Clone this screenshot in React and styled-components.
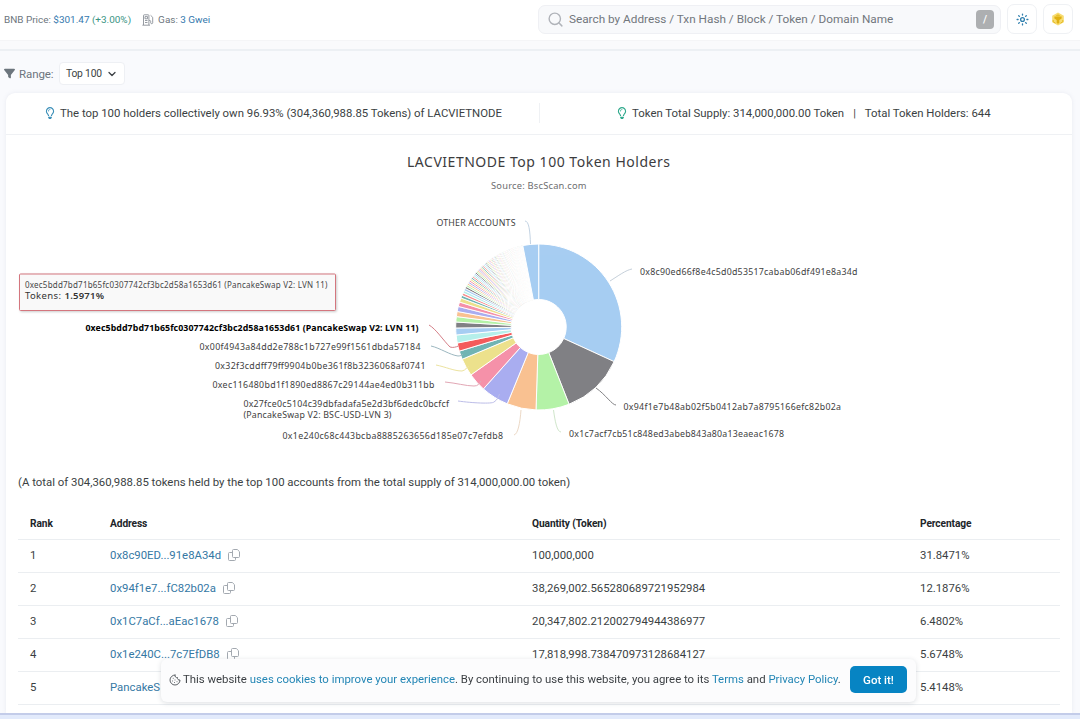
import React from "react";
import styled, { createGlobalStyle } from "styled-components";
import { FaFilter, FaRegLightbulb } from "react-icons/fa6";
import { ChevronDown, Cookie, Search } from "lucide-react";

const HOLDERS = [
  { rank: 1, address: "0x8c90ED...91e8A34d", quantity: "100,000,000", share: "31.8471%" },
  { rank: 2, address: "0x94f1e7...fC82b02a", quantity: "38,269,002.565280689721952984", share: "12.1876%" },
  { rank: 3, address: "0x1C7aCf...aEac1678", quantity: "20,347,802.212002794944386977", share: "6.4802%" },
  { rank: 4, address: "0x1e240C...7c7EfDB8", quantity: "17,818,998.738470973128684127", share: "5.6748%" },
  { rank: 5, address: "PancakeS", quantity: "", share: "5.4148%" },
];

const COLORS = [
  "#7cb5ec",
  "#434348",
  "#90ed7d",
  "#f7a35c",
  "#8085e9",
  "#f15c80",
  "#e4d354",
  "#2b908f",
  "#f45b5b",
  "#91e8e1",
];

const CX = 532.7;
const CY = 192;
const OUTER = 83;
const INNER = 27.5;
const ACTIVE = 8;
const OTHERS = 3.07;

const TOP_SHARES = [
  31.8471, 12.1876, 6.4802, 5.6748, 5.4148, 3.6, 3.45, 1.65, 1.5971, 1.55, 1.35, 1.15, 1.05, 1,
  0.98, 0.88, 0.82, 0.55, 0.5, 0.5, 0.46, 0.42,
];

const sum = (list) => list.reduce((a, b) => a + b, 0);

// largest wallets first, then the long tail, then everything else
const buildShares = () => {
  const tail = Array.from({ length: 100 - TOP_SHARES.length }, (_, i) => 0.978 ** i);
  const scale = (100 - OTHERS - sum(TOP_SHARES)) / sum(tail);
  return [...TOP_SHARES, ...tail.map((value) => value * scale), OTHERS];
};

const point = (angle, r) => {
  const a = (angle / 100) * Math.PI * 2;
  return `${(CX + Math.sin(a) * r).toFixed(2)} ${(CY - Math.cos(a) * r).toFixed(2)}`;
};

const buildSlices = () => {
  let start = 0;
  return buildShares().map((share, i) => {
    const end = start + share;
    const d = `M${point(start, OUTER)}A${OUTER} ${OUTER} 0 0 1 ${point(end, OUTER)}L${point(
      end,
      INNER
    )}A${INNER} ${INNER} 0 0 0 ${point(start, INNER)}Z`;
    start = end;
    return { d, color: COLORS[i % COLORS.length], faded: i !== ACTIVE };
  });
};

const SLICES = buildSlices();

const CONNECTORS = [
  { d: "M519 86C523 86 524 96 524.5 109", color: "#c3d3e3" },
  { d: "M626 134C620 135 612 141 604 146", color: "#c6d0da" },
  { d: "M610 270C606 270 600 260 590 253", color: "#828285" },
  { d: "M555 297C551 297 549 286 547.5 275", color: "#d0e6cb" },
  { d: "M508 300C512 299 514 288 515 275", color: "#ecd9c6" },
  { d: "M452 266C466 268 486 269 488 267C491 265 492 263 493.5 259", color: "#bcbde8" },
  { d: "M439 247C450 248 460 251 468 251C472 251 473 249 475 246", color: "#e2a7b5" },
  { d: "M430 230C440 232 448 236 456 236C460 235 460 233 463 231", color: "#ece3a0" },
  { d: "M425 211C434 213 444 220 452 221C455 221 456 220 457 219", color: "#9cb7c0" },
  { d: "M423 190C430 194 437 205 444 212C447 213 450 212 452.5 211", color: "#d57f88" },
];

const LABELS = [
  { x: 430.5, y: 90.5, w: 79, text: "OTHER ACCOUNTS" },
  { x: 634, y: 139.5, w: 217.5, text: "0x8c90ed66f8e4c5d0d53517cabab06df491e8a34d" },
  { x: 617.5, y: 274.5, w: 217.5, text: "0x94f1e7b48ab02f5b0412ab7a8795166efc82b02a" },
  { x: 563, y: 302, w: 215, text: "0x1c7acf7cb51c848ed3abeb843a80a13eaeac1678" },
  { x: 276.5, y: 303.5, w: 220.5, text: "0x1e240c68c443bcba8885263656d185e07c7efdb8" },
  { x: 237.5, y: 271.5, w: 205.5, text: "0x27fce0c5104c39dbfadafa5e2d3bf6dedc0bcfcf" },
  { x: 237.5, y: 282.5, w: 148, text: "(PancakeSwap V2: BSC-USD-LVN 3)" },
  { x: 206.5, y: 252.5, w: 222, text: "0xec116480bd1f1890ed8867c29144ae4ed0b311bb" },
  { x: 209, y: 233.5, w: 210.5, text: "0x32f3cddff79ff9904b0be361f8b3236068af0741" },
  { x: 193.5, y: 214.5, w: 221, text: "0x00f4943a84dd2e788c1b727e99f1561dbda57184" },
  { x: 79.5, y: 195.5, w: 333, text: "0xec5bdd7bd71b65fc0307742cf3bc2d58a1653d61 (PancakeSwap V2: LVN 11)", bold: true },
];

const GasIcon = () => (
  <svg width="12" height="12" viewBox="0 0 12 12" fill="none" stroke="#8b9198" strokeWidth="0.9">
    <path d="M1.5 11V1.5a.7.7 0 0 1 .7-.7h4a.7.7 0 0 1 .7.7V11M.4 11.2h7.6M3 2.6h2.5v2.2H3zM3 6.5h2.5M3 8.5h2.5M7 6.5h.8c.6 0 .9.4.9.9v1.4c0 .5.4.9 1 .9s1-.4 1-.9V3.3L8.6 1.3" />
  </svg>
);

const CopyIcon = () => (
  <svg width="12" height="12" viewBox="0 0 12 12" fill="none" stroke="#a3a9b0" strokeWidth="1">
    <path d="M4.5 1.5a1 1 0 0 1 1-1h3.8L11.5 2.7v4.8a1 1 0 0 1-1 1h-5a1 1 0 0 1-1-1z" />
    <path d="M4.3 3.5H1.5a1 1 0 0 0-1 1v6a1 1 0 0 0 1 1h5a1 1 0 0 0 1-1V8.7" />
  </svg>
);

const SunIcon = () => (
  <svg width="13" height="13" viewBox="0 0 13 13" fill="none" stroke="#2f7fae" strokeWidth="1.3" strokeLinecap="round">
    <circle cx="6.5" cy="6.5" r="1.9" />
    <path d="M6.5 1.1v1M6.5 10.9v1M1.1 6.5h1M10.9 6.5h1M2.7 2.7l.7.7M9.6 9.6l.7.7M2.7 10.3l.7-.7M9.6 3.4l.7-.7" />
  </svg>
);

const ChainIcon = () => (
  <svg width="14" height="14" viewBox="0 0 14 14">
    <path d="M7 .4 12.8 3.7v6.6L7 13.6 1.2 10.3V3.7z" fill="#f7dc72" />
    <path d="M3.4 4.6h7.2v2L8.3 8v3L7 11.7 5.700 11V8L3.400 6.600z" fill="#dfb011" />
    <path d="M4.6 3.6 7 2.2l2.4 1.4L7 4.8z" fill="#e8c02f" />
    <path d="M2.2 8v1.8l2.3 1.3M11.8 8v1.8l-2.3 1.3" fill="none" stroke="#e3b71f" strokeWidth="0.9" />
  </svg>
);

const HoldersChart = () => (
  <Chart viewBox="0 0 1066 330" width="1066" height="330">
    <ChartTitle x="401" y="31.5" textLength="263">
      LACVIETNODE Top 100 Token Holders
    </ChartTitle>
    <ChartSource x="485" y="53.5" textLength="95.5">
      Source: BscScan.com
    </ChartSource>
    {SLICES.map((slice, i) => (
      <Slice key={i} d={slice.d} fill={slice.color} $faded={slice.faded} />
    ))}
    {CONNECTORS.map((line) => (
      <path key={line.d} d={line.d} stroke={line.color} fill="none" />
    ))}
    {LABELS.map((label) => (
      <SliceLabel key={label.text} x={label.x} y={label.y} textLength={label.w} $bold={label.bold}>
        {label.text}
      </SliceLabel>
    ))}
    <TipBox x="13.5" y="139" width="316" height="36.5" rx="1" />
    <TipText x="19" y="153" textLength="302.5">
      0xec5bdd7bd71b65fc0307742cf3bc2d58a1653d61 (PancakeSwap V2: LVN 11)
    </TipText>
    <TipValue x="19" y="164.4" textLength="36">
      Tokens:
    </TipValue>
    <TipValue x="58.5" y="164.4" textLength="39.5" $bold>
      1.5971%
    </TipValue>
  </Chart>
);

export default function App() {
  return (
    <Page>
      <GlobalStyle />
      <Header>
        <Stats>
          <span>
            BNB Price: <Blue>$301.47</Blue> <Green>(+3.00%)</Green>
          </span>
          <Gas>
            <GasIcon />
            <span>
              Gas: <Blue>3 Gwei</Blue>
            </span>
          </Gas>
        </Stats>
        <SearchBox>
          <Search size={17} strokeWidth={2} color="#b0b3b9" />
          <SearchText>Search by Address / Txn Hash / Block / Token / Domain Name</SearchText>
          <Slash>/</Slash>
        </SearchBox>
        <IconButton>
          <SunIcon />
        </IconButton>
        <IconButton>
          <ChainIcon />
        </IconButton>
      </Header>
      <SubBar />
      <Toolbar>
        <FaFilter size={11} color="#6c757d" />
        <RangeText>Range:</RangeText>
        <Select>
          Top 100
          <ChevronDown size={12} strokeWidth={2.5} />
        </Select>
      </Toolbar>
      <Card>
        <Summary>
          <SummaryItem $left={38}>
            <FaRegLightbulb size={12} color="#3b8fb8" />
            <SummaryText>
              The top 100 holders collectively own 96.93% (304,360,988.85 Tokens) of LACVIETNODE
            </SummaryText>
          </SummaryItem>
          <SummaryItem $left={76} $divided>
            <FaRegLightbulb size={12} color="#2fa98c" />
            <SummaryText>Token Total Supply: 314,000,000.00 Token</SummaryText>
            <Pipe>|</Pipe>
            <SummaryText>Total Token Holders: 644</SummaryText>
          </SummaryItem>
        </Summary>
        <HoldersChart />
        <Total>
          (A total of 304,360,988.85 tokens held by the top 100 accounts from the total supply of
          314,000,000.00 token)
        </Total>
        <Table>
          <HeadRow>
            <span>Rank</span>
            <span>Address</span>
            <span>Quantity (Token)</span>
            <span>Percentage</span>
          </HeadRow>
          {HOLDERS.map((holder) => (
            <Row key={holder.rank}>
              <span>{holder.rank}</span>
              <Address>
                {holder.address}
                {holder.quantity && <CopyIcon />}
              </Address>
              <span>{holder.quantity}</span>
              <span>{holder.share}</span>
            </Row>
          ))}
        </Table>
      </Card>
      <Footer />
      <CookieBar>
        <Cookie size={12} strokeWidth={1.8} color="#4a4f55" />
        <CookieText>
          This website <Link>uses cookies to improve your experience</Link>. By continuing to use
          this website, you agree to its <Link>Terms</Link> and <Link>Privacy Policy</Link>.
        </CookieText>
        <Accept>Got it!</Accept>
      </CookieBar>
    </Page>
  );
}

const GlobalStyle = createGlobalStyle`
  * {
    box-sizing: border-box;
  }
  body {
    margin: 0;
    overflow: hidden;
    background: #f9fafd;
    font-family: Roboto, "Liberation Sans", sans-serif;
    color: #3b3f43;
  }
  svg {
    flex: none;
  }
`;

const Page = styled.div`
  display: flex;
  flex-direction: column;
  width: 1080px;
  height: 719px;
  overflow: hidden;
`;

const Header = styled.header`
  display: flex;
  align-items: center;
  flex: none;
  height: 41px;
  padding: 0 7px 2px 4px;
  background: #fff;
  border-bottom: 1px solid #f5f5f7;
`;

const Stats = styled.div`
  display: flex;
  flex: 1;
  gap: 11px;
  padding-top: 1px;
  font-size: 9.95px;
  color: #6c757d;
`;

const Gas = styled.div`
  display: flex;
  align-items: center;
  gap: 4px;
`;

const Blue = styled.span`
  color: #3478ad;
`;

const Green = styled.span`
  color: #3a9483;
`;

const SearchBox = styled.div`
  display: flex;
  align-items: center;
  width: 463px;
  height: 29px;
  margin-right: 6px;
  padding: 0 6px 0 8px;
  background: #f8f9fb;
  border: 1px solid #eff0f4;
  border-radius: 7px;
`;

const SearchText = styled.span`
  flex: 1;
  margin-left: 5px;
  font-size: 11.77px;
  color: #72777d;
`;

const Slash = styled.span`
  width: 18px;
  height: 19px;
  border-radius: 4px;
  background: #adafb1;
  color: #fff;
  font-size: 10.5px;
  font-weight: 500;
  line-height: 19px;
  text-align: center;
`;

const IconButton = styled.button`
  display: flex;
  align-items: center;
  justify-content: center;
  width: 30px;
  height: 30px;
  padding: 0;
  background: #fff;
  border: 1px solid #eff1f4;
  border-radius: 7px;

  & + & {
    margin-left: 6px;
  }
`;

const SubBar = styled.div`
  flex: none;
  height: 10px;
  background: #fafafc;
  border-bottom: 2px solid #edf0f4;
`;

const Toolbar = styled.div`
  display: flex;
  align-items: center;
  flex: none;
  height: 42px;
  padding: 3px 0 0 4px;
`;

const RangeText = styled.span`
  width: 40px;
  margin-left: 4px;
  font-size: 11.5px;
  letter-spacing: -0.1px;
  color: #6c757d;
`;

const Select = styled.div`
  display: flex;
  align-items: center;
  gap: 4px;
  width: 66px;
  height: 23px;
  padding-left: 6px;
  background: #fff;
  border: 1px solid #eef0f4;
  border-radius: 4px;
  font-size: 10.3px;
  letter-spacing: -0.2px;
`;

const Card = styled.main`
  display: flex;
  flex-direction: column;
  flex: 1;
  min-height: 0;
  margin: 0 8px 0 6px;
  overflow: hidden;
  background: #fff;
  border-radius: 9px 9px 0 0;
  box-shadow: 0 0 4px rgba(120, 130, 160, 0.13);
`;

const Summary = styled.div`
  display: grid;
  grid-template-columns: 1fr 1fr;
  align-items: center;
  flex: none;
  height: 42px;
  padding-bottom: 1px;
  border-bottom: 1px solid #eff1f4;
`;

const SummaryItem = styled.div`
  display: flex;
  align-items: center;
  height: 20px;
  min-width: 0;
  padding-left: ${(p) => p.$left}px;
  border-left: ${(p) => (p.$divided ? "1px solid #eff1f4" : "none")};
`;

const SummaryText = styled.span`
  margin-left: 4px;
  font-size: 11.38px;
  white-space: nowrap;
`;

const Pipe = styled.span`
  margin: 0 5px 0 9px;
  font-size: 11px;
`;

const Chart = styled.svg`
  flex: none;
  display: block;
  font-family: "Noto Sans", "Open Sans", sans-serif;
`;

const ChartTitle = styled.text`
  font-size: 14px;
  fill: #3c3c3e;
`;

const ChartSource = styled.text`
  font-size: 9.3px;
  fill: #6d6d6f;
`;

const Slice = styled.path`
  stroke: #fff;
  stroke-width: 1px;
  opacity: ${(p) => (p.$faded ? 0.67 : 1)};
`;

const SliceLabel = styled.text`
  font-size: 8.8px;
  font-weight: ${(p) => (p.$bold ? 700 : 400)};
  fill: ${(p) => (p.$bold ? "#000" : "#3e3e40")};
`;

const TipBox = styled.rect`
  fill: #f9f9f9;
  stroke: #d4767e;
  filter: drop-shadow(1px 1px 1px rgba(0, 0, 0, 0.2));
`;

const TipText = styled.text`
  font-size: 8px;
  fill: #464648;
`;

const TipValue = styled.text`
  font-size: 9.5px;
  font-weight: ${(p) => (p.$bold ? 600 : 400)};
  fill: #333;
`;

const Total = styled.p`
  flex: none;
  height: 42px;
  margin: 0;
  padding: 9px 12px 0;
  font-size: 11.38px;
  line-height: 16px;
`;

const Table = styled.div`
  flex: none;
  margin: 0 12px;
  font-size: 11.35px;
`;

const Row = styled.div`
  display: grid;
  grid-template-columns: 80px 422px 388px 1fr;
  align-items: center;
  height: 33px;
  padding: 0 0 2px 12px;
  border-bottom: 1px solid #ebeef1;
  white-space: nowrap;
`;

const HeadRow = styled(Row)`
  padding-bottom: 0;
  font-size: 10.2px;
  font-weight: 700;
  letter-spacing: -0.1px;
  color: #212529;
`;

const Address = styled.span`
  display: flex;
  align-items: center;
  gap: 7px;
  color: #3578a4;
`;

const Footer = styled.footer`
  flex: none;
  height: 6px;
  background: #e2eafb;
  border-top: 2px solid #c3cce9;
`;

const CookieBar = styled.div`
  position: fixed;
  left: 161px;
  bottom: 17px;
  display: flex;
  align-items: center;
  width: 755px;
  height: 43px;
  padding: 0 9px 2px 8px;
  background: #fcfcfd;
  border-radius: 6px;
  box-shadow: 0 1px 5px rgba(60, 70, 90, 0.18);
`;

const CookieText = styled.span`
  flex: 1;
  margin-left: 2px;
  padding-bottom: 2px;
  font-size: 11.39px;
  white-space: nowrap;
`;

const Link = styled.a`
  color: #2386b5;
`;

const Accept = styled.button`
  flex: none;
  width: 57px;
  height: 27px;
  padding: 0;
  border: 0;
  border-radius: 5px;
  background: #0784c3;
  color: #fff;
  font-family: inherit;
  font-size: 11.5px;
  font-weight: 500;
`;
